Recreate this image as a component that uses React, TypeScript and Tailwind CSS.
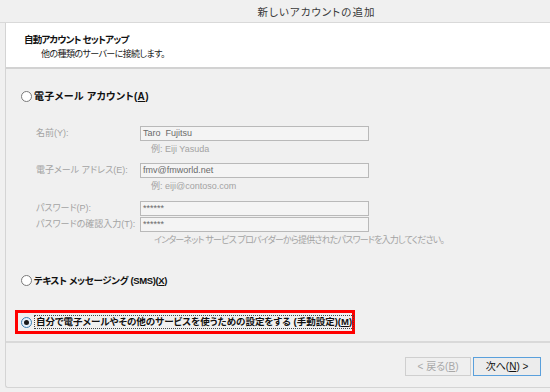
import clsx from 'clsx';

const font = "font-['Liberation_Sans','Noto_Sans_CJK_JP',sans-serif] [font-feature-settings:'palt']";

function Radio({ checked }: { checked?: boolean }) {
  return (
    <span className={clsx('w-[11px] h-[11px] rounded-full border flex items-center justify-center shrink-0',
      checked ? 'border-[#3c7fb1] bg-[#e6f1fb]' : 'border-[#7a7a7a] bg-white')}>
      {checked && <span className="w-[5px] h-[5px] rounded-full bg-[#1a1a1a]" />}
    </span>
  );
}

function Field({ label, value, hint }: { label: string; value: string; hint?: string }) {
  return (
    <div>
      <div className="flex items-center h-[15px]">
        <div className="w-[104px] pl-[25px] box-content text-[#a3a3a3] whitespace-nowrap">{label}</div>
        <div className="w-[229px] h-[15px] border border-[#b9b9b9] bg-[#f4f4f4] flex items-center px-[2px] text-[#6a6a6a] whitespace-pre">{value}</div>
      </div>
      {hint && <div className="pl-[140px] mt-[2px] h-[13px] text-[#a3a3a3] leading-[13px]">{hint}</div>}
    </div>
  );
}

export default function App() {
  return (
    <div className={clsx('w-[550px] h-[392px] bg-[#f0f0f0] overflow-hidden text-[9px] leading-none', font)}>
      {/* title bar */}
      <div className="h-[23px] border-b border-[#d9d9d9] flex items-center justify-center pl-[83px] pt-[2px] text-[10.5px] tracking-[1px] text-[#3a3a3a]">
        新しいアカウントの追加
      </div>

      <div className="ml-[5px] h-[365px] border-l border-b border-[#d4d4d4] rounded-bl-[3px] flex flex-col">
        {/* header */}
        <div className="h-[46px] bg-white border-b-2 border-[#d2d2d2] pl-[18px] pt-[12px]">
          <div className="font-bold text-[#111] text-[9.5px] tracking-[-0.8px]">自動アカウント セットアップ</div>
          <div className="pl-[17px] mt-[5px] text-[#222] tracking-[-0.6px]">他の種類のサーバーに接続します。</div>
        </div>

        {/* body */}
        <div className="flex-1 flex flex-col pt-[21px] pl-[15px]">
          <label className="flex items-center gap-[2px] h-[13px]">
            <Radio />
            <span className="font-bold text-[#111] text-[10px] tracking-[0.3px]">電子メール アカウント(<span className="underline">A</span>)</span>
          </label>

          <div className="-ml-[10px] mt-[23px] flex flex-col">
            <Field label="名前(Y):" value="Taro  Fujitsu" hint="例: Eiji Yasuda" />
            <div className="mt-[7px]">
              <Field label="電子メール アドレス(E):" value="fmv@fmworld.net" hint="例: eiji@contoso.com" />
            </div>
            <div className="mt-[8px] flex flex-col gap-[1px]">
              <Field label="パスワード(P):" value="******" />
              <Field label="パスワードの確認入力(T):" value="******" />
            </div>
            <div className="pl-[143px] mt-[4px] text-[#a3a3a3] tracking-[-0.8px] whitespace-nowrap">インターネット サービス プロバイダーから提供されたパスワードを入力してください。</div>
          </div>

          <label className="flex items-center gap-[2px] h-[13px] mt-[29px]">
            <Radio />
            <span className="font-bold text-[#111] text-[9.5px] tracking-[-0.35px]">テキスト メッセージング (SMS)(<span className="underline">X</span>)</span>
          </label>

          <div className="-ml-[6px] mt-[23px] w-[340px] h-[24px] border-[3px] border-[#ff0000] flex items-center pl-[3px] gap-[2px]">
            <Radio checked />
            <span className="border border-dotted border-[#444] px-[1px] py-[1px] font-bold text-[#111] text-[9.5px] whitespace-nowrap">
              自分で電子メールやその他のサービスを使うための設定をする (手動設定)(<span className="underline">M</span>)
            </span>
          </div>

          <div className="mt-[7px] -ml-[15px] border-t-2 border-[#d9d9d9]" />

          <div className="flex justify-end gap-[2px] pr-[9px] mt-[14px] text-[10px]">
            <button className="w-[66px] h-[19px] border border-[#cfcfcf] bg-[#efefef] text-[#a8a8a8]">&lt; 戻る(<span className="underline">B</span>)</button>
            <button className="w-[68px] h-[19px] border border-[#5aa0dc] bg-[#ececec] text-[#111]">次へ(<span className="underline">N</span>) &gt;</button>
          </div>
        </div>
      </div>
    </div>
  );
}
